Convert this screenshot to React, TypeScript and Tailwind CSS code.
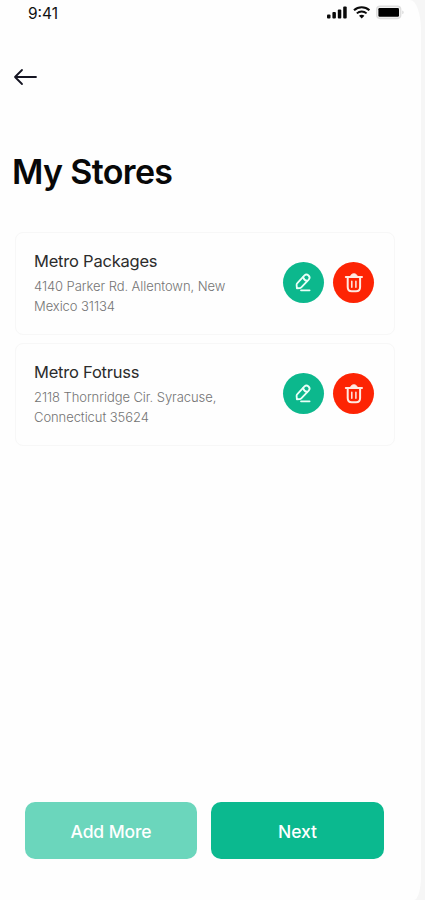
type Store = {
  name: string
  lines: string[]
}

const stores: Store[] = [
  { name: 'Metro Packages', lines: ['4140 Parker Rd. Allentown, New', 'Mexico 31134'] },
  { name: 'Metro Fotruss', lines: ['2118 Thornridge Cir. Syracuse,', 'Connecticut 35624'] },
]

function StatusBar() {
  return (
    <div className="flex h-[26px] items-center justify-between pl-7 pr-[16px]">
      <span className="pt-px text-[15.5px] leading-[26px] text-[#111]">9:41</span>
      <svg className="h-[16px] w-[78px]" viewBox="0 0 78 16" fill="none">
        {/* Signal */}
        <g fill="#0a0a0a">
          <rect x="0" y="9.5" width="3.5" height="4" rx="1" />
          <rect x="5.4" y="7" width="3.5" height="6.5" rx="1" />
          <rect x="10.8" y="4.5" width="3.5" height="9" rx="1" />
          <rect x="16.2" y="1.5" width="3.5" height="12" rx="1" />
        </g>
        {/* Wifi */}
        <path d="M27 5.2c4.4-4 11-4 15.400 0" stroke="#0a0a0a" strokeWidth="2.1" />
        <path d="M29.8 8.400c2.8-2.5 7-2.5 9.8 0" stroke="#0a0a0a" strokeWidth="1.9" />
        <path d="M32 10.800c1.5-1.3 3.9-1.3 5.400 0L34.700 13.600z" fill="#0a0a0a" />
        {/* Battery */}
        <rect x="49.7" y="1.2" width="24" height="12.3" rx="3.4" fill="#f3f3f3" stroke="#dedede" strokeWidth="1.4" />
        <rect x="51.4" y="3" width="20.6" height="8.8" rx="1.2" fill="#000" />
        <path d="M75.5 5.600v3.600c1.3-.5 1.3-3.100 0-3.600z" fill="#c8c8c8" />
      </svg>
    </div>
  )
}

function EditIcon() {
  return (
    <svg className="h-[22px] w-[22px]" viewBox="0 0 22 22" fill="none" stroke="#eafff8" strokeWidth="1.8" strokeLinecap="round" strokeLinejoin="round">
      <path d="M4.1 11.3L11.500 3.400c1.300-1.300 2.600-1.200 4 .1s1.500 2.700.2 4.100L8.300 15.300c-.4.400-.8.600-1.300.7l-3.100.3-.3-3.400c0-.6.1-1.200.5-1.600z" />
      <path d="M10.200 5.200c.5 1.900 1.900 3.400 4 3.800M8 18.300h8.600" />
    </svg>
  )
}

function TrashIcon() {
  return (
    <svg className="h-[22px] w-[22px]" viewBox="0 0 22 22" fill="none" stroke="#ffe9e2" strokeWidth="2" strokeLinecap="round" strokeLinejoin="round">
      <path d="M2.8 4.900h16.200" />
      <path d="M7.400 4.500c.6-1.900 1.600-2.700 3.500-2.700s2.900.8 3.500 2.700z" fill="#ffe9e2" strokeWidth="1" />
      <path d="M4.700 5.500v9.500c0 2.800 1.400 4.300 4 4.300h4.400c2.600 0 4-1.500 4-4.300V5.500" />
      <path d="M8.800 9.300v6M12.900 9.300v6" strokeWidth="1.5" />
    </svg>
  )
}

function StoreCard({ store }: { store: Store }) {
  return (
    <div className="flex h-[103px] items-start justify-between rounded-lg border border-[#f7f7f7] pl-[18px] pr-[20px]">
      <div className="pt-4">
        <h2 className="text-[16.5px] leading-6 tracking-[-0.22px] text-[#2c2c2c]">{store.name}</h2>
        <p className="mt-[3px] text-[13px] font-light leading-5 tracking-[-0.07px] text-[#747474]">
          {store.lines.map((line) => (
            <span key={line} className="block whitespace-nowrap">{line}</span>
          ))}
        </p>
      </div>
      <div className="flex gap-[9px] pt-[29px]">
        <button aria-label="Edit" className="flex h-[41px] w-[41px] items-center justify-center rounded-full bg-[#0cb88d]">
          <EditIcon />
        </button>
        <button aria-label="Delete" className="flex h-[41px] w-[41px] items-center justify-center rounded-full bg-[#fd2404]">
          <TrashIcon />
        </button>
      </div>
    </div>
  )
}

export default function App() {
  return (
    <div className="h-[900px] w-[425px] overflow-hidden bg-[#f6f6f6] font-['Inter',sans-serif]">
      <div className="flex h-full w-[421px] flex-col rounded-tr-[11px_30px] rounded-br-[7px_24px] bg-[#fefefe]">
        <StatusBar />

        <button aria-label="Back" className="ml-[13px] mt-[39px] h-6 w-6">
          <svg className="h-6 w-6" viewBox="0 0 24 24" fill="none" stroke="#151522" strokeWidth="1.8" strokeLinecap="round" strokeLinejoin="round">
            <path d="M23 12H2M9 5l-7 7 7 7" />
          </svg>
        </button>

        <h1 className="ml-3 mt-[62px] text-[34px] font-semibold leading-[42px] tracking-[-0.65px] text-[#080808]">My Stores</h1>

        <div className="ml-[15px] mt-[39px] flex w-[380px] flex-col gap-2">
          {stores.map((store) => (
            <StoreCard key={store.name} store={store} />
          ))}
        </div>

        <div className="mb-[41px] ml-[25px] mt-auto flex gap-[14px] text-[17.5px] font-medium tracking-[-0.1px] text-white">
          <button className="h-[57px] w-[172px] rounded-[10px] bg-[#6bd6bc] pt-[3px]">Add More</button>
          <button className="h-[57px] w-[173px] rounded-[10px] bg-[#0bb98f] pt-[3px]">Next</button>
        </div>
      </div>
    </div>
  )
}
